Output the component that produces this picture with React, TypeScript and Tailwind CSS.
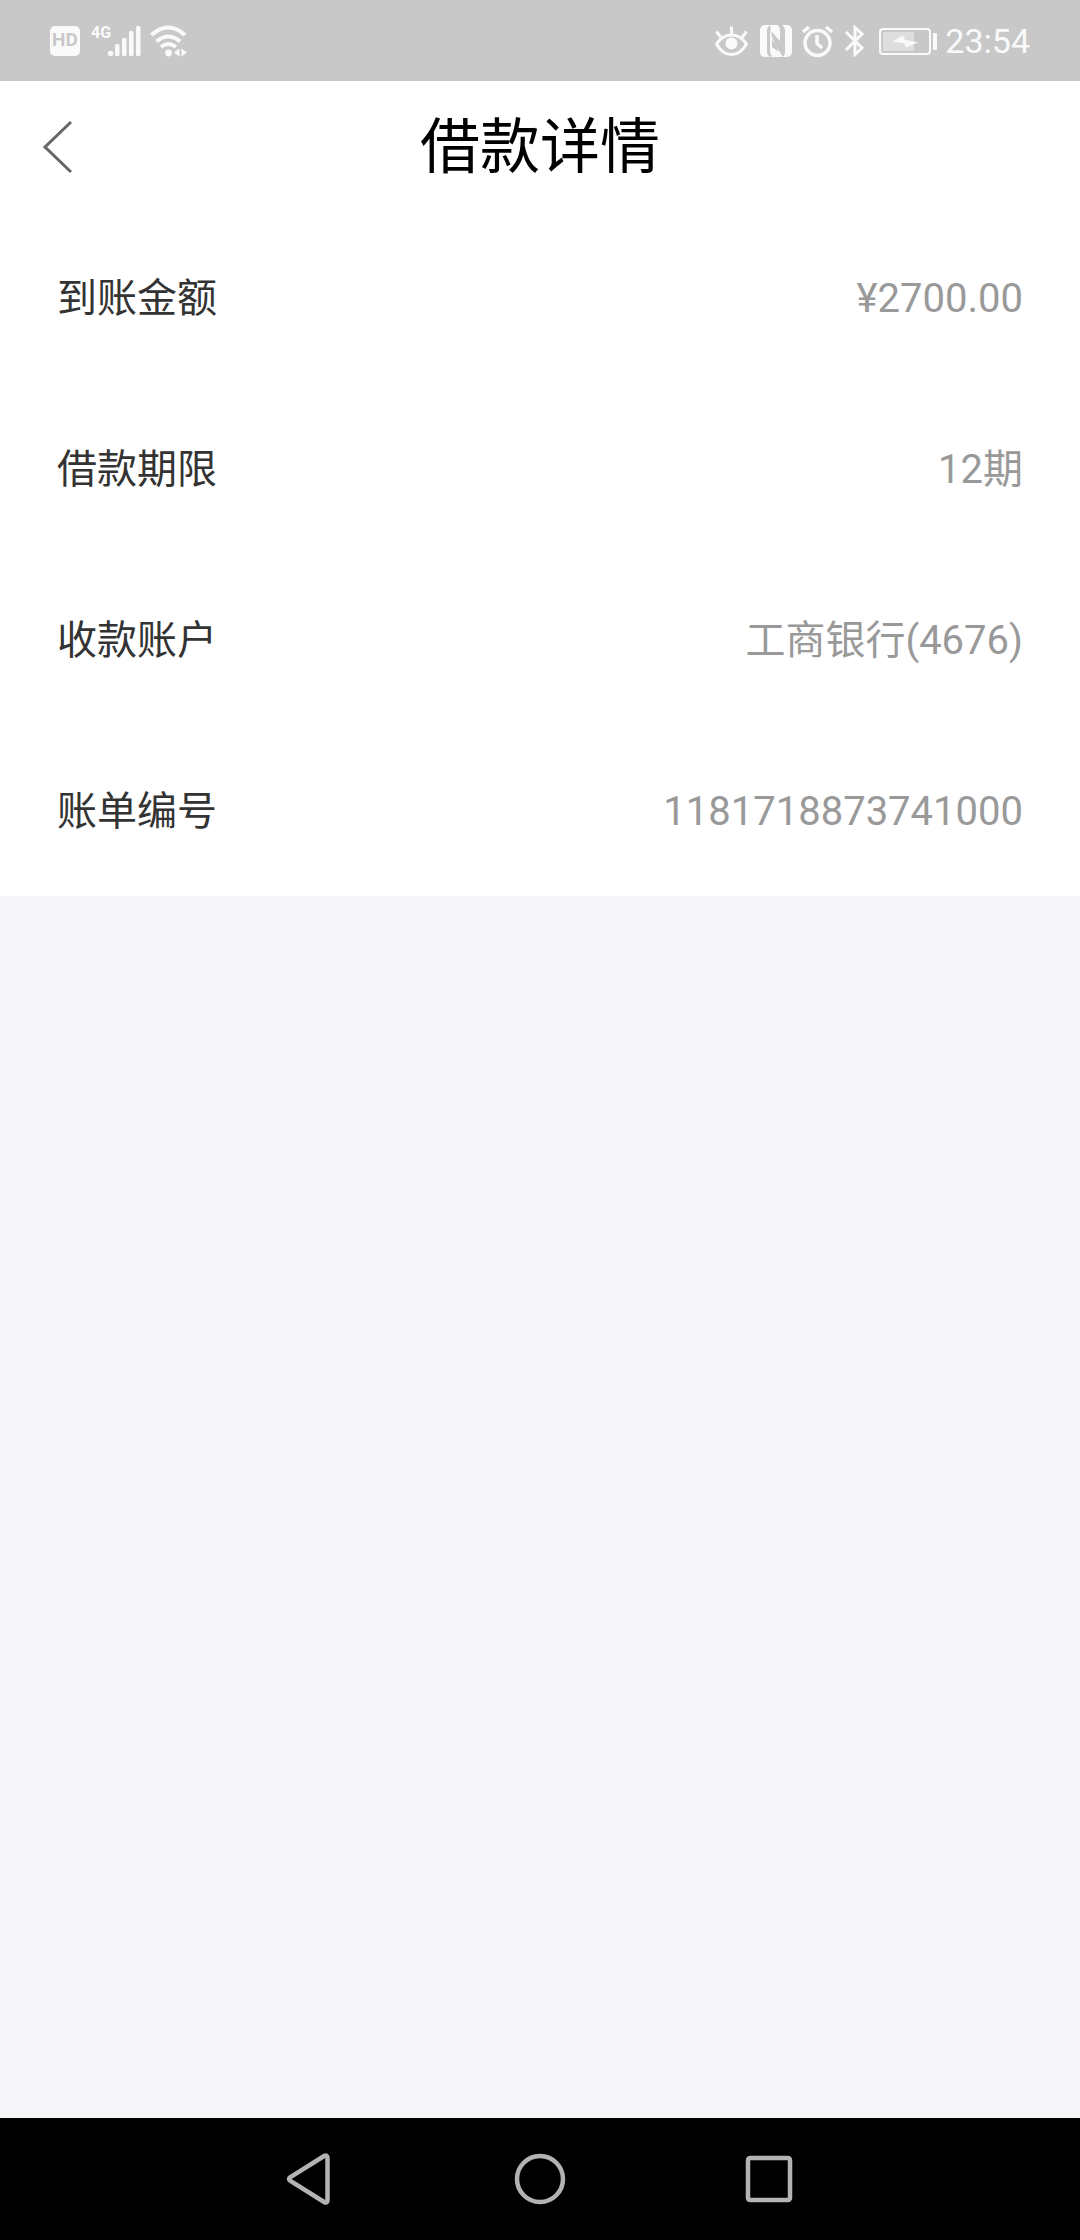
import type { ReactNode } from 'react'

interface DetailRow {
  label: string
  value: string
}

const ROWS: DetailRow[] = [
  { label: '到账金额', value: '¥2700.00' },
  { label: '借款期限', value: '12期' },
  { label: '收款账户', value: '工商银行(4676)' },
  { label: '账单编号', value: '1181718873741000' },
]

export default function App() {
  return (
    <div className="flex min-h-screen flex-col bg-[#f6f6f8] font-['Roboto','Noto_Sans_CJK_SC',sans-serif]">
      <StatusBar />

      {/* Title bar */}
      <header className="grid h-[131px] grid-cols-[1fr_auto_1fr] items-center bg-white">
        <button type="button" aria-label="返回" className="justify-self-start py-4 pl-[42px] pr-6 text-[#666]">
          <svg width="32" height="54" viewBox="0 0 32 54" fill="none" stroke="currentColor" strokeWidth="3">
            <path d="M29 2 3 27 29 52" />
          </svg>
        </button>
        <h1 className="pt-[2px] text-[60px] leading-none text-black">借款详情</h1>
      </header>

      <main className="grow">
        <dl className="bg-white px-[57px]">
          {ROWS.map(row => (
            <div key={row.label} className="flex h-[171px] items-center justify-between pt-[2px] text-[40px]">
              <dt className="text-[#333]">{row.label}</dt>
              <dd className="text-[#999]">{row.value}</dd>
            </div>
          ))}
        </dl>
      </main>

      {/* System navigation */}
      <nav className="flex h-[122px] items-center justify-center gap-[178px] bg-black text-[#b3b3b3]">
        <NavButton label="后退">
          <path d="M43.500 4.500v43a2 2 0 0 1-3 1.700L6 27.700a2 2 0 0 1 0-3.400L40.500 2.800a2 2 0 0 1 3 1.700Z" />
        </NavButton>
        <NavButton label="主屏幕">
          <circle cx="26" cy="26" r="23" />
        </NavButton>
        <NavButton label="最近任务">
          <rect x="4" y="5" width="42" height="42" rx="2" />
        </NavButton>
      </nav>
    </div>
  )
}

function NavButton({ label, children }: { label: string; children: ReactNode }) {
  return (
    <button type="button" aria-label={label}>
      <svg width="52" height="52" viewBox="0 0 52 52" fill="none" stroke="currentColor" strokeWidth="4.500">
        {children}
      </svg>
    </button>
  )
}

function StatusBar() {
  return (
    <div className="flex h-[81px] items-center justify-between bg-[#c8c8c8] px-[50px] text-[#fafafa]">
      <div className="flex items-center">
        <span className="flex size-[30px] items-center justify-center rounded-[5px] bg-[#fafafa] text-[19px] font-bold text-[#c8c8c8]">
          HD
        </span>
        <span className="ml-[11px] h-8 w-[17px] text-[16px] font-bold leading-4">4G</span>
        <svg width="34" height="32" viewBox="0 0 34 32" fill="currentColor">
          <circle cx="2.500" cy="28.500" r="2.700" />
          <rect x="7" y="19" width="4.500" height="12" rx="1.500" />
          <rect x="14" y="13" width="4.500" height="18" rx="1.500" />
          <rect x="21" y="6" width="4.500" height="25" rx="1.500" />
          <rect x="28" y="1" width="4.500" height="30" rx="1.500" />
        </svg>
        <svg className="ml-2" width="38" height="32" viewBox="0 0 38 32" fill="none" stroke="currentColor" strokeWidth="4">
          <path d="M1.500 10Q18 -5 35 10M6.500 16.500Q18 6.500 30 16.500M11 22Q18 16 26 22" />
          <g fill="currentColor" stroke="none">
            <circle cx="18.500" cy="28" r="3.400" />
            <path d="m24 27.500 5.500-4v8ZM37 27.500l-5.500-4v8Z" />
          </g>
        </svg>
      </div>

      <div className="flex items-center">
        <svg width="34" height="32" viewBox="0 0 34 32" fill="none" stroke="currentColor" strokeWidth="3">
          <path d="M1.500 19C6 12.500 11 10 16.500 10S27 12.500 31.500 19C27 27 22 29.500 16.500 29.500S6 27 1.500 19Z" />
          <path d="M16.500 1.500V10M1.500 6.500l4.500 6M31.500 6.500l-4.500 6" />
          <circle cx="16.500" cy="18.500" r="6" fill="currentColor" stroke="none" />
        </svg>
        {/* NFC */}
        <svg className="ml-[11px]" width="32" height="32" viewBox="0 0 32 32">
          <rect width="32" height="32" rx="5" fill="currentColor" />
          <path
            d="M10 0Q7 2 7 6v20q0 4 3 6l2-1q-2-2-2-5V5l10 11V5q0-3-2-5h4q3 2 3 6v20q0 4-2 6L12 14v8l7 5-7-15Z"
            fill="#c8c8c8"
          />
        </svg>
        <svg className="ml-[10px]" width="32" height="32" viewBox="0 0 32 32" fill="none" stroke="currentColor" strokeWidth="3.500">
          <circle cx="15.500" cy="18" r="12.500" />
          <path d="M15 10v8.500l5 4.500M1 7 7 2M30 7 24 2" />
        </svg>
        <svg className="ml-[10px]" width="21" height="32" viewBox="0 0 21 32" fill="none" stroke="currentColor" strokeWidth="3">
          <path d="m2 7 16 16-7 6.500V2.500L18 9 2 25" />
        </svg>
        <svg className="ml-[14px]" width="60" height="32" viewBox="0 0 60 32">
          <rect x="1" y="4" width="50" height="25" rx="3" fill="none" stroke="currentColor" strokeWidth="2" />
          <rect x="4" y="7" width="31" height="19" fill="#dedede" />
          <rect x="54" y="8" width="4" height="17" rx="1" fill="currentColor" />
          <path d="m13 16.500 11-6 2 4.500 13 2.500-12 5-2-4.500Z" fill="currentColor" />
        </svg>
        <span className="ml-[6px] text-[34px] leading-none">23:54</span>
      </div>
    </div>
  )
}
